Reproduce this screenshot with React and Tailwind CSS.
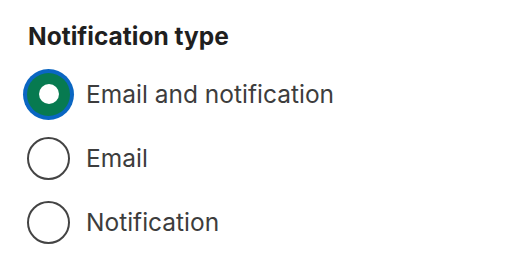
export default function App() {
  const options = [
    { label: "Email and notification", checked: true },
    { label: "Email", checked: false },
    { label: "Notification", checked: false },
  ];
  return (
    <div className="w-[531px] h-[280px] bg-white pl-[28px] pt-[21px]" style={{ fontFamily: "Inter, 'Noto Sans', sans-serif" }}>
      <h2 className="text-[24.5px] leading-[30px] font-bold text-[#1f1f1f] m-0">Notification type</h2>
      <div className="mt-[11px] flex flex-col">
        {options.map((o) => (
          <label key={o.label} className="flex items-center h-[64px] gap-[16px]">
            {o.checked ? (
              <span className="-ml-px w-[43px] h-[43px] rounded-full bg-[#077a50] ring-4 ring-[#0a66c2] flex items-center justify-center shrink-0">
                <span className="w-[20px] h-[20px] rounded-full bg-white"></span>
              </span>
            ) : (
              <span className="-ml-px w-[43px] h-[43px] rounded-full border-2 border-[#444] bg-white shrink-0"></span>
            )}
            <span className="text-[24.5px] text-[#3d3d3d]">{o.label}</span>
          </label>
        ))}
      </div>
    </div>
  );
}
